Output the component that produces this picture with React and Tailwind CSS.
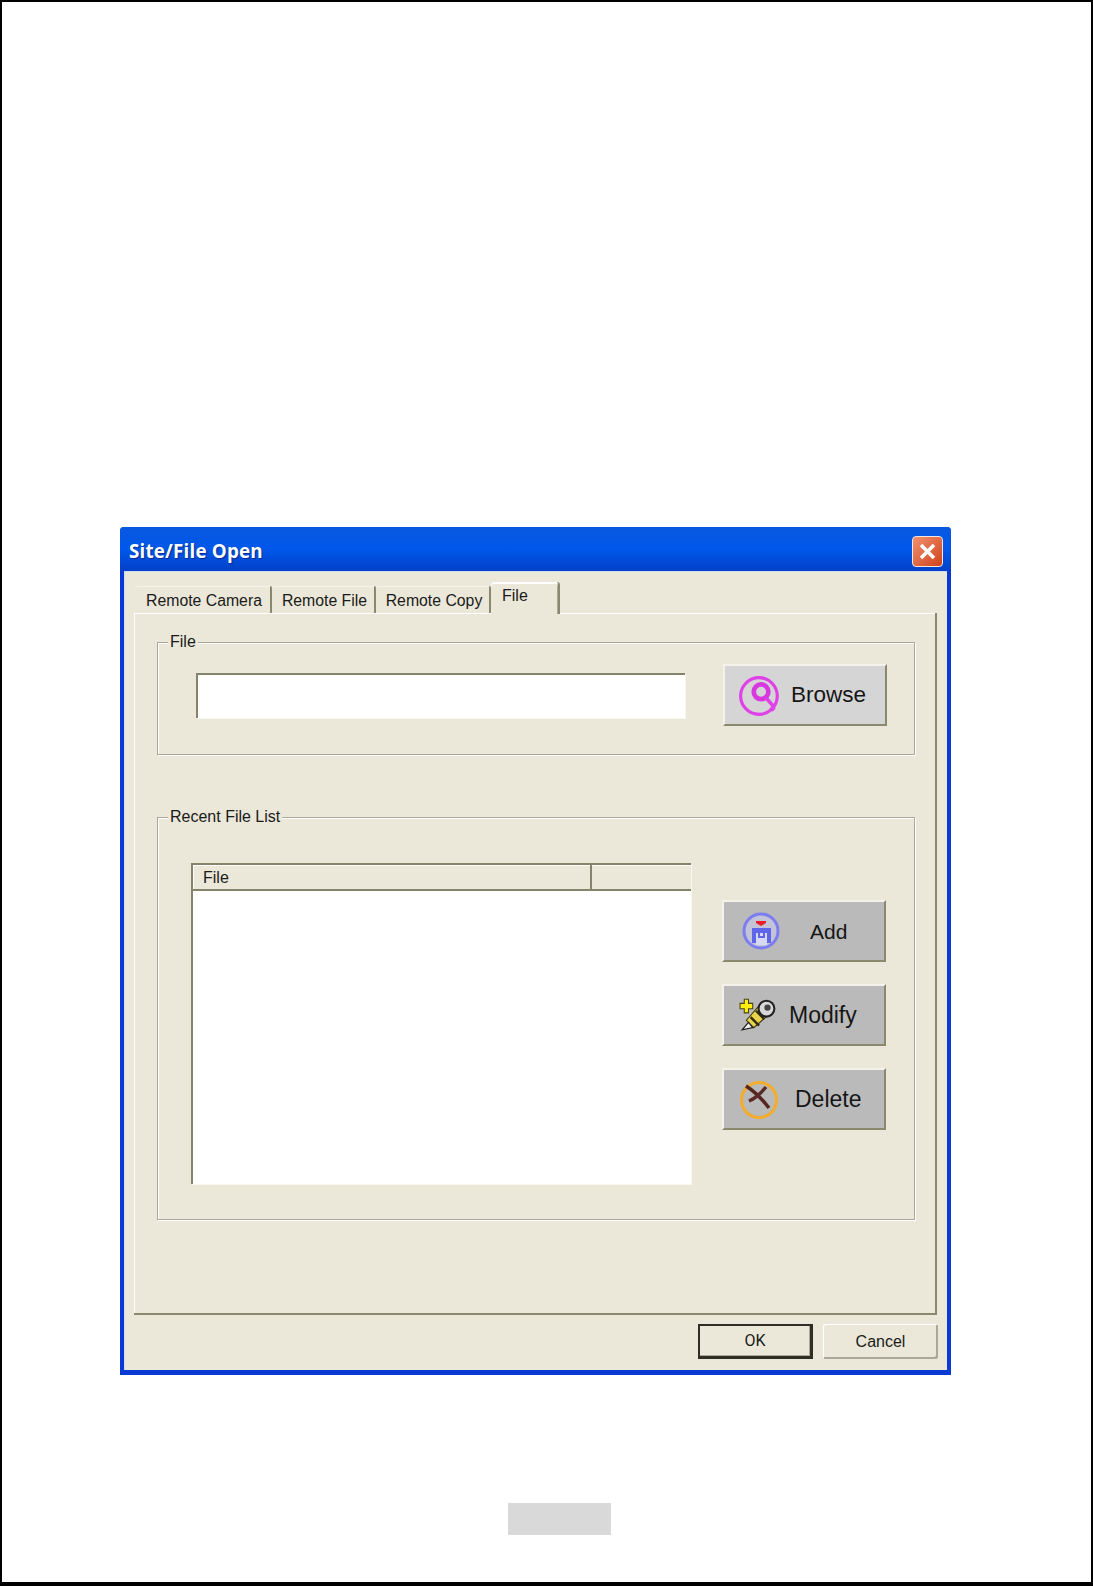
const etched = "border border-[#aca899] shadow-[inset_1px_1px_0_#fff,1px_1px_0_#fff]";

function BrowseIcon() {
  return (
    <svg width="44" height="44" viewBox="0 0 42 42" fill="none" className="blur-[0.5px]">
      <circle cx="20" cy="21" r="17.5" stroke="#e040e8" strokeWidth="3" />
      <circle cx="22" cy="17" r="7" stroke="#d838e0" strokeWidth="4.5" />
      <path d="M27 23l7 8" stroke="#e040e8" strokeWidth="3.5" />
      <path d="M30 33l3-3 3 3-3 3z" fill="#e040e8" />
    </svg>
  );
}

function AddIcon() {
  return (
    <svg width="40" height="40" viewBox="0 0 40 40" fill="none" className="blur-[0.5px]">
      <circle cx="21" cy="20" r="17" fill="#c4c4d8" stroke="#7d7df2" strokeWidth="3" />
      <path d="M16 10h10v2l-5 3-5-3z" fill="#ee1c25" />
      <path d="M12 17h19v15H12z" fill="#5f66ea" />
      <path d="M16 22h11v12H16z" fill="#d6d8f4" />
      <path d="M19 21v5h5v-5" stroke="#5f66ea" strokeWidth="2" />
    </svg>
  );
}

function ModifyIcon() {
  return (
    <svg width="38" height="38" viewBox="0 0 36 36" fill="none" className="blur-[0.4px]">
      <path d="M7 23L20 8l10 8-16 14z" fill="#e8d24a" stroke="#3a3410" strokeWidth="1" />
      <path d="M11 20l8 8M16 14l8 8" stroke="#2e2a10" strokeWidth="2.2" />
      <path d="M9 25l-6 7 10-2z" fill="#f4f4f4" stroke="#222" strokeWidth="1.2" />
      <circle cx="26" cy="12" r="7.5" fill="#d8d8d8" stroke="#222" strokeWidth="2" />
      <circle cx="27" cy="11" r="3" fill="#444" />
      <path d="M5 3h4v4h4v5H9v4H5v-4H1V7h4z" fill="#ffee10" stroke="#4a4410" strokeWidth="1" />
    </svg>
  );
}

function DeleteIcon() {
  return (
    <svg width="40" height="40" viewBox="0 0 40 40" fill="none" className="blur-[0.5px]">
      <circle cx="20" cy="21" r="17.5" stroke="#f3ac2c" strokeWidth="3" />
      <path d="M7 7c8 5 16 13 23 22" stroke="#56261f" strokeWidth="3.5" />
      <path d="M10 22c7-3 12-8 17-14" stroke="#5a2a24" strokeWidth="3.5" />
    </svg>
  );
}

function ImageButton({ icon, label, bg, iconClass, labelClass }) {
  return (
    <button className={`relative flex h-[62px] w-[164px] items-center border-2 border-t-[#f4f2ea] border-l-[#f4f2ea] border-r-[#8a886f] border-b-[#8a886f] ${bg}`}>
      <span className={iconClass}>{icon}</span>
      <span className={`leading-none text-[#161616] ${labelClass}`}>{label}</span>
    </button>
  );
}

function Tab({ label, width, active }) {
  if (active) {
    return (
      <div className="relative z-10 -mb-px flex h-[32px] w-[69px] items-start rounded-t-[3px] border-r-2 border-[#8a886f] bg-[#ebe8d9] pl-[11px] pt-[2px] shadow-[inset_0_2px_0_#fff,inset_-1px_0_0_#aca899]">
        <span>{label}</span>
      </div>
    );
  }
  return (
    <div className={`flex h-[27px] items-center justify-center rounded-t-[2px] border-r-2 border-[#8a886f] pl-[3px] pt-[2px] shadow-[inset_0_1px_0_#f6f4ea] text-[15.8px] ${width}`}>
      {label}
    </div>
  );
}

function Group({ label, className, children }) {
  return (
    <div className={`relative ${etched} ${className}`}>
      <span className="absolute -top-[11px] left-[10px] bg-[#ebe8d9] px-[2px] leading-[20px]">{label}</span>
      {children}
    </div>
  );
}

export default function App() {
  return (
    <div className="h-[1586px] w-[1093px] border-x-2 border-t-2 border-b-4 border-black bg-white pl-[118px] pt-[525px] font-['Liberation_Sans',sans-serif]">
      <div className="flex h-[848px] w-[831px] flex-col overflow-hidden rounded-t-[4px] bg-[#0a3ad4]">
        <div className="flex h-[44px] shrink-0 items-center justify-between bg-gradient-to-b from-[#0a58e0] via-[#0058ea] to-[#0440c8] pl-[9px] pr-[8px] pt-[4px]">
          <span className="font-['Open_Sans',sans-serif] text-[18.8px] font-bold leading-none tracking-[0.2px] text-white [text-shadow:1px_1px_1px_#0a2a90]">
            Site/File Open
          </span>
          <div className="flex h-[31px] w-[31px] items-center justify-center rounded-[4px] border border-[#f0e8e0] bg-gradient-to-br from-[#f09070] to-[#d04010]">
            <svg width="19" height="19" viewBox="0 0 19 19">
              <path d="M3 3l13 13M16 3L3 16" stroke="#fff" strokeWidth="3.5" />
            </svg>
          </div>
        </div>

        <div className="mx-[4px] mb-[5px] flex flex-1 flex-col bg-[#ebe8d9] pl-[10px] pr-[10px] pt-[11px] text-[16px] text-[#1a1a1a] shadow-[inset_1px_1px_0_#cfdcf4]">
          <div className="flex h-[31px] shrink-0 items-end pl-[1px]">
            <Tab label="Remote Camera" width="w-[137px]" />
            <Tab label="Remote File" width="w-[104px]" />
            <Tab label="Remote Copy" width="w-[115px]" />
            <Tab label="File" active />
          </div>

          <div className="flex h-[702px] shrink-0 flex-col border-r-2 border-b-2 border-r-[#8a886f] border-b-[#8a886f] pl-[23px] pr-[20px] pt-[29px] shadow-[inset_1px_1px_0_#fff]">
            <Group label="File" className="flex h-[113px] shrink-0 items-start pl-[38px] pr-[27px] pt-[30px]">
              <div className="h-[45px] w-[491px] border-l-2 border-t-2 border-l-[#85836c] border-t-[#85836c] bg-white shadow-[1px_1px_0_#f8f8f0]" />
              <div className="ml-[38px] -mt-[9px]">
                <ImageButton icon={<BrowseIcon />} label="Browse" bg="bg-[#d5d5d5]" iconClass="ml-[13px] mt-[1px]" labelClass="ml-[9px] text-[22.5px]" />
              </div>
            </Group>

            <Group label="Recent File List" className="mt-[62px] flex h-[403px] shrink-0 items-start pl-[33px] pr-[27px] pt-[45px]">
              <div className="flex h-[321px] w-[500px] shrink-0 flex-col border-l-2 border-t-2 border-l-[#85836c] border-t-[#85836c] shadow-[1px_1px_0_#f8f8f0]">
                <div className="flex h-[26px] shrink-0 border-b-2 border-b-[#85836c] shadow-[inset_1px_1px_0_#fff]">
                  <div className="w-[399px] border-r-2 border-r-[#85836c] pl-[10px] pt-[3px] leading-[20px]">File</div>
                </div>
                <div className="flex-1 bg-white" />
              </div>
              <div className="ml-[31px] mt-[37px] flex flex-col gap-[22px]">
                <ImageButton icon={<AddIcon />} label="Add" bg="bg-[#bababa]" iconClass="ml-[16px]" labelClass="ml-[30px] text-[21px]" />
                <ImageButton icon={<ModifyIcon />} label="Modify" bg="bg-[#bababa]" iconClass="ml-[15px]" labelClass="ml-[12px] text-[23px]" />
                <ImageButton icon={<DeleteIcon />} label="Delete" bg="bg-[#bababa]" iconClass="ml-[15px]" labelClass="ml-[16px] text-[23px]" />
              </div>
            </Group>
          </div>

          <div className="mt-[9px] -mr-px flex justify-end gap-[10px]">
            <button className="h-[35px] w-[115px] border-2 border-[#2f2e24] border-b-[3px] border-r-[3px] bg-[#ebe8d9] text-center font-['Roboto',sans-serif] shadow-[inset_-1px_-1px_0_#aca899]">OK</button>
            <button className="h-[35px] w-[115px] rounded-[2px] bg-[#ebe8d9] text-center shadow-[inset_1px_1px_0_#fff,inset_-2px_-2px_0_#aca899]">Cancel</button>
          </div>
        </div>
      </div>

      <div className="ml-[388px] mt-[128px] h-[32px] w-[103px] bg-[#d9d9d9]" />
    </div>
  );
}
